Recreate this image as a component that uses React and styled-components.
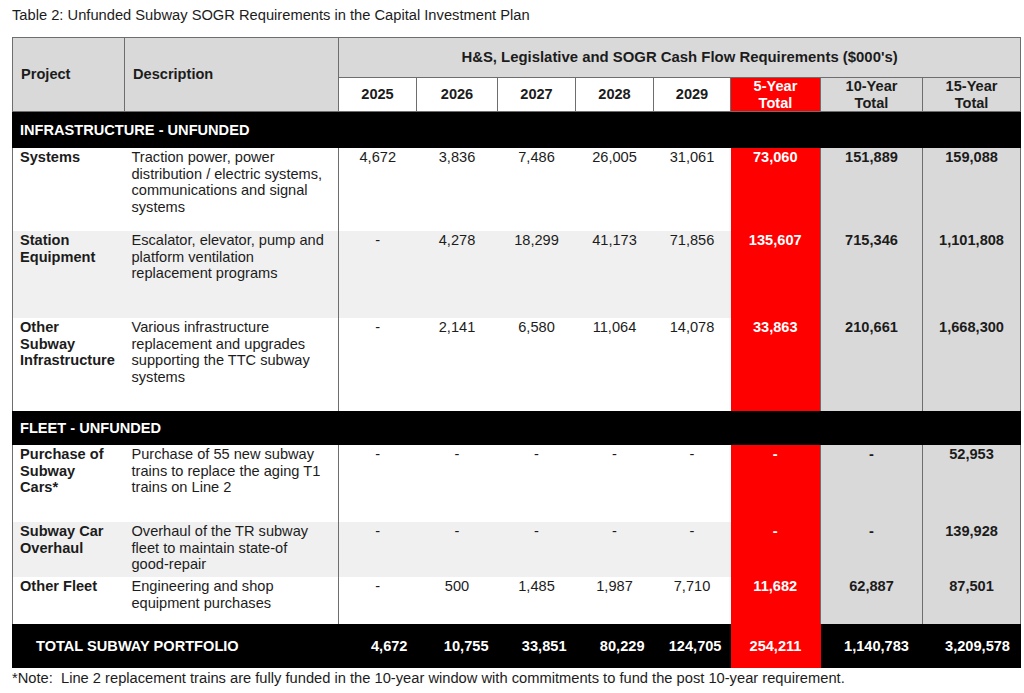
import React from 'react';
import styled, { createGlobalStyle, css } from 'styled-components';

const Global = createGlobalStyle`
  html, body { margin: 0; padding: 0; background: #fff; }
  body { font-family: "Liberation Sans", Arial, sans-serif; color: #1c1c1c; }
`;

const LINE = '#6e6e6e';

const Page = styled.div`
  padding: 7px 0 0 12px;
  width: 1008px;
`;

const Title = styled.div`
  font-size: 14.7px;
  line-height: 16px;
  margin-bottom: 14px;
`;

const Table = styled.table`
  width: 1008px;
  border-collapse: collapse;
  table-layout: fixed;
  font-size: 14.6px;
  line-height: 16.7px;
`;

const HeadCell = styled.th`
  border: 1px solid ${LINE};
  font-weight: bold;
  vertical-align: middle;
  padding: 0 6px;
  text-align: ${(p) => (p.$left ? 'left' : 'center')};
  ${(p) => p.$left && css`padding-left: 8px;`}
  ${(p) => p.$wide && css`font-size: 14.9px;`}
  background: ${(p) =>
    p.$tone === 'red' ? '#ff0000' : p.$tone === 'white' ? '#ffffff' : '#d9d9d9'};
  color: ${(p) => (p.$tone === 'red' ? '#ffffff' : '#1c1c1c')};
`;

const HeadRow = styled.tr`
  height: ${(p) => p.$h}px;
`;

const SectionRow = styled.tr`
  height: ${(p) => p.$h}px;
  background: #000;
`;

const SectionCell = styled.td`
  color: #fff;
  font-weight: bold;
  padding: 0 7px;
  vertical-align: middle;
  border-left: 1px solid #000;
  border-right: 1px solid #000;
`;

const DataRow = styled.tr`
  height: ${(p) => p.$h}px;
  background: ${(p) => (p.$shade ? '#f0f0f0' : '#ffffff')};
`;

const ProjectCell = styled.td`
  font-weight: bold;
  vertical-align: top;
  padding: 1px 4px 0 7px;
  border-left: 1px solid ${LINE};
  white-space: nowrap;
`;

const DescCell = styled.td`
  vertical-align: top;
  padding: 1px 4px 0 7px;
  border-right: 1px solid ${LINE};
  white-space: nowrap;
`;

const NumCell = styled.td`
  vertical-align: top;
  text-align: center;
  padding: 1px 2px 0;
  white-space: nowrap;
  ${(p) =>
    p.$tone === 'red' &&
    css`
      background: #ff0000;
      color: #fff;
      font-weight: bold;
    `}
  ${(p) =>
    p.$tone === 'grey' &&
    css`
      background: #d9d9d9;
      font-weight: bold;
      border-left: 1px solid ${LINE};
      border-right: 1px solid ${LINE};
    `}
`;

const TotalRow = styled.tr`
  height: ${(p) => p.$h}px;
  background: #000;
  color: #fff;
  font-weight: bold;
`;

const TotalLabel = styled.td`
  padding: 0 0 0 23px;
  vertical-align: middle;
  white-space: nowrap;
  border-left: 1px solid #000;
`;

const TotalCell = styled.td`
  vertical-align: middle;
  white-space: nowrap;
  text-align: ${(p) => (p.$align === 'right' ? 'right' : 'center')};
  padding: ${(p) => (p.$align === 'right' ? '0 9px 0 0' : p.$shift ? `0 0 0 ${p.$shift}px` : '0')};
  background: ${(p) => (p.$red ? '#ff0000' : '#000')};
`;

const Note = styled.div`
  font-size: 14.7px;
  line-height: 18px;
  white-space: pre;
  margin-top: 1px;
`;

const Lines = ({ lines }) =>
  lines.map((l, i) => (
    <React.Fragment key={i}>
      {i > 0 && <br />}
      {l}
    </React.Fragment>
  ));

const widths = [112, 214, 78, 81, 78, 78, 77, 90, 102, 98];

const infra = [
  {
    h: 83,
    project: ['Systems'],
    desc: ['Traction power, power', 'distribution / electric systems,', 'communications and signal', 'systems'],
    nums: ['4,672', '3,836', '7,486', '26,005', '31,061', '73,060', '151,889', '159,088'],
  },
  {
    h: 87,
    shade: true,
    project: ['Station', 'Equipment'],
    desc: ['Escalator, elevator, pump and', 'platform ventilation', 'replacement programs'],
    nums: ['-', '4,278', '18,299', '41,173', '71,856', '135,607', '715,346', '1,101,808'],
  },
  {
    h: 93,
    project: ['Other', 'Subway', 'Infrastructure'],
    desc: ['Various infrastructure', 'replacement and upgrades', 'supporting the TTC subway', 'systems'],
    nums: ['-', '2,141', '6,580', '11,064', '14,078', '33,863', '210,661', '1,668,300'],
  },
];

const fleet = [
  {
    h: 77,
    project: ['Purchase of', 'Subway', 'Cars*'],
    desc: ['Purchase of 55 new subway', 'trains to replace the aging T1', 'trains on Line 2'],
    nums: ['-', '-', '-', '-', '-', '-', '-', '52,953'],
  },
  {
    h: 55,
    shade: true,
    project: ['Subway Car', 'Overhaul'],
    desc: ['Overhaul of the TR subway', 'fleet to maintain state-of', 'good-repair'],
    nums: ['-', '-', '-', '-', '-', '-', '-', '139,928'],
  },
  {
    h: 47,
    project: ['Other Fleet'],
    desc: ['Engineering and shop', 'equipment purchases'],
    nums: ['-', '500', '1,485', '1,987', '7,710', '11,682', '62,887', '87,501'],
  },
];

const toneFor = (i) => (i === 5 ? 'red' : i >= 6 ? 'grey' : undefined);

const Row = ({ r }) => (
  <DataRow $h={r.h} $shade={r.shade}>
    <ProjectCell>
      <Lines lines={r.project} />
    </ProjectCell>
    <DescCell>
      <Lines lines={r.desc} />
    </DescCell>
    {r.nums.map((n, i) => (
      <NumCell key={i} $tone={toneFor(i)}>
        {n}
      </NumCell>
    ))}
  </DataRow>
);

const totals = [
  { v: '4,672', align: 'right' },
  { v: '10,755', align: 'right' },
  { v: '33,851', align: 'right' },
  { v: '80,229', align: 'right' },
  { v: '124,705', align: 'right' },
  { v: '254,211', red: true },
  { v: '1,140,783', shift: 10 },
  { v: '3,209,578', shift: 12 },
];

export default function App() {
  return (
    <>
      <Global />
      <Page>
        <Title>Table 2: Unfunded Subway SOGR Requirements in the Capital Investment Plan</Title>
        <Table>
          <colgroup>
            {widths.map((w, i) => (
              <col key={i} style={{ width: w }} />
            ))}
          </colgroup>
          <thead>
            <HeadRow $h={40}>
              <HeadCell rowSpan={2} $left>
                Project
              </HeadCell>
              <HeadCell rowSpan={2} $left>
                Description
              </HeadCell>
              <HeadCell colSpan={8} $wide>
                H&amp;S, Legislative and SOGR Cash Flow Requirements ($000's)
              </HeadCell>
            </HeadRow>
            <HeadRow $h={34}>
              {['2025', '2026', '2027', '2028', '2029'].map((y) => (
                <HeadCell key={y} $tone="white">
                  {y}
                </HeadCell>
              ))}
              <HeadCell $tone="red">
                5-Year
                <br />
                Total
              </HeadCell>
              <HeadCell>
                10-Year
                <br />
                Total
              </HeadCell>
              <HeadCell>
                15-Year
                <br />
                Total
              </HeadCell>
            </HeadRow>
          </thead>
          <tbody>
            <SectionRow $h={36}>
              <SectionCell colSpan={10}>INFRASTRUCTURE - UNFUNDED</SectionCell>
            </SectionRow>
            {infra.map((r, i) => (
              <Row key={i} r={r} />
            ))}
            <SectionRow $h={34}>
              <SectionCell colSpan={10}>FLEET - UNFUNDED</SectionCell>
            </SectionRow>
            {fleet.map((r, i) => (
              <Row key={i} r={r} />
            ))}
            <TotalRow $h={44}>
              <TotalLabel colSpan={2}>TOTAL SUBWAY PORTFOLIO</TotalLabel>
              {totals.map((t, i) => (
                <TotalCell key={i} $align={t.align} $red={t.red} $shift={t.shift}>
                  {t.v}
                </TotalCell>
              ))}
            </TotalRow>
          </tbody>
        </Table>
        <Note>*Note:  Line 2 replacement trains are fully funded in the 10-year window with commitments to fund the post 10-year requirement.</Note>
      </Page>
    </>
  );
}
